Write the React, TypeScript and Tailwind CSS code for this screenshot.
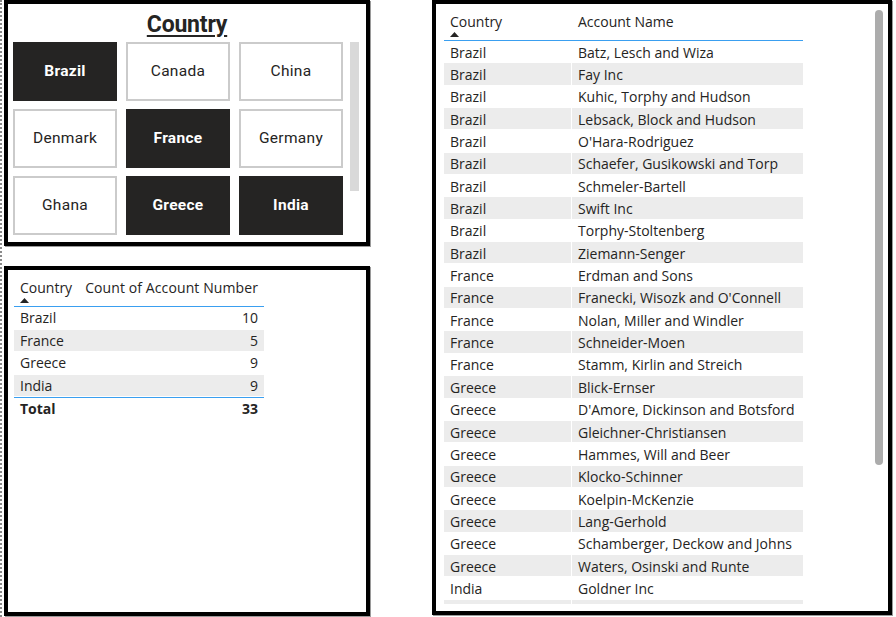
import React from "react";

/** Slicer tile entry */
interface Tile {
  name: string;
  selected: boolean;
}

const TILES: Tile[] = [
  { name: "Brazil", selected: true },
  { name: "Canada", selected: false },
  { name: "China", selected: false },
  { name: "Denmark", selected: false },
  { name: "France", selected: true },
  { name: "Germany", selected: false },
  { name: "Ghana", selected: false },
  { name: "Greece", selected: true },
  { name: "India", selected: true },
];

const COUNTS: [string, number][] = [
  ["Brazil", 10],
  ["France", 5],
  ["Greece", 9],
  ["India", 9],
];

const ACCOUNTS: [string, string][] = [
  ["Brazil", "Batz, Lesch and Wiza"],
  ["Brazil", "Fay Inc"],
  ["Brazil", "Kuhic, Torphy and Hudson"],
  ["Brazil", "Lebsack, Block and Hudson"],
  ["Brazil", "O'Hara-Rodriguez"],
  ["Brazil", "Schaefer, Gusikowski and Torp"],
  ["Brazil", "Schmeler-Bartell"],
  ["Brazil", "Swift Inc"],
  ["Brazil", "Torphy-Stoltenberg"],
  ["Brazil", "Ziemann-Senger"],
  ["France", "Erdman and Sons"],
  ["France", "Franecki, Wisozk and O'Connell"],
  ["France", "Nolan, Miller and Windler"],
  ["France", "Schneider-Moen"],
  ["France", "Stamm, Kirlin and Streich"],
  ["Greece", "Blick-Ernser"],
  ["Greece", "D'Amore, Dickinson and Botsford"],
  ["Greece", "Gleichner-Christiansen"],
  ["Greece", "Hammes, Will and Beer"],
  ["Greece", "Klocko-Schinner"],
  ["Greece", "Koelpin-McKenzie"],
  ["Greece", "Lang-Gerhold"],
  ["Greece", "Schamberger, Deckow and Johns"],
  ["Greece", "Waters, Osinski and Runte"],
  ["India", "Goldner Inc"],
  ["India", "Hane-Kozey"],
];

const tableFont = "font-['Open_Sans','Noto_Sans',sans-serif]";

/* Small sort-ascending marker under the first header */
function SortUp() {
  return (
    <svg width="9" height="5" viewBox="0 0 9 5" className="block">
      <path d="M0 5 L4.5 0 L9 5 Z" fill="#252423" />
    </svg>
  );
}

function Panel({ className, children }: { className: string; children: React.ReactNode }) {
  return (
    <div className={`border-4 border-black bg-white shadow-[1px_1px_0_#9a9a9a] ${className}`}>
      {children}
    </div>
  );
}

export default function App() {
  return (
    <div className="w-[896px] h-[617px] bg-white overflow-hidden flex text-[#252423]">
      {/* dotted page edge */}
      <div className="w-[4px] h-full border-l-[2px] border-dotted border-[#8a8a8a] shrink-0" />

      {/* Left column */}
      <div className="w-[366px] flex flex-col gap-[20px] shrink-0">
        {/* Slicer */}
        <Panel className="h-[246px] flex flex-col">
          <div className="h-[38px] pb-[3px] flex items-end justify-center">
            <span className="font-['Roboto',sans-serif] font-bold text-[23px] leading-[28px] underline underline-offset-[3px] decoration-2 tracking-[-0.2px]">
              Country
            </span>
          </div>
          <div className="flex pl-[5px] gap-[7px]">
            <div className="grid grid-cols-[104px_104px_104px] auto-rows-[59px] gap-x-[9px] gap-y-[8px]">
              {TILES.map((t) => (
                <div
                  key={t.name}
                  className={[
                    "flex items-center justify-center font-['Roboto',sans-serif] text-[15.5px] tracking-[0.3px]",
                    t.selected
                      ? "bg-[#252423] text-white font-bold"
                      : "bg-white border-2 border-[#cbcbcb] text-[#252423]",
                  ].join(" ")}
                >
                  {t.name}
                </div>
              ))}
            </div>
            <div className="w-[9px] h-[149px] bg-[#d9d9d9]" />
          </div>
        </Panel>

        {/* Count table */}
        <Panel className={`h-[350px] pt-[8px] pl-[6px] ${tableFont} text-[14px]`}>
          <div className="w-[250px]">
            <div className="flex h-[29px] border-b border-[#3a9ff0]">
              <div className="w-[62px] pl-[6px] flex flex-col">
                <span className="leading-[20px]">Country</span>
                <SortUp />
              </div>
              <div className="flex-1 pr-[6px] text-right leading-[20px] tracking-[0.1px]">Count of Account Number</div>
            </div>
            {COUNTS.map(([c, n], i) => (
              <div
                key={c}
                className={`flex h-[22.5px] items-center border-b border-white ${i % 2 ? "bg-[#ececec]" : "bg-white"}`}
              >
                <div className="w-[62px] pl-[6px]">{c}</div>
                <div className="flex-1 pr-[6px] text-right">{n}</div>
              </div>
            ))}
            <div className="flex h-[22px] items-center border-t border-[#3a9ff0] font-bold">
              <div className="w-[62px] pl-[6px]">Total</div>
              <div className="flex-1 pr-[6px] text-right">33</div>
            </div>
          </div>
        </Panel>
      </div>

      {/* Right table */}
      <Panel className={`ml-[62px] w-[460px] h-[615px] flex ${tableFont} text-[14px]`}>
        <div className="pl-[8px] pt-[8px] w-[367px]">
          <div className="flex h-[29px] border-b border-[#3a9ff0]">
            <div className="w-[128px] pl-[6px] flex flex-col">
              <span className="leading-[20px]">Country</span>
              <SortUp />
            </div>
            <div className="flex-1 pl-[6px] leading-[20px]">Account Name</div>
          </div>
          <div className="h-[563px] overflow-hidden">
            {ACCOUNTS.map(([c, a], i) => (
              <div
                key={a}
                className={`flex h-[22.35px] items-center border-b border-white ${i % 2 ? "bg-[#ececec]" : "bg-white"}`}
              >
                <div className="w-[128px] pl-[6px] pt-px border-r border-white h-full flex items-center">{c}</div>
                <div className="flex-1 pl-[6px] pt-px whitespace-nowrap">{a}</div>
              </div>
            ))}
          </div>
        </div>
        <div className="flex-1 flex justify-end pr-[5px] pt-[6px]">
          <div className="w-[8px] h-[455px] rounded-full bg-[#acacac]" />
        </div>
      </Panel>
    </div>
  );
}
